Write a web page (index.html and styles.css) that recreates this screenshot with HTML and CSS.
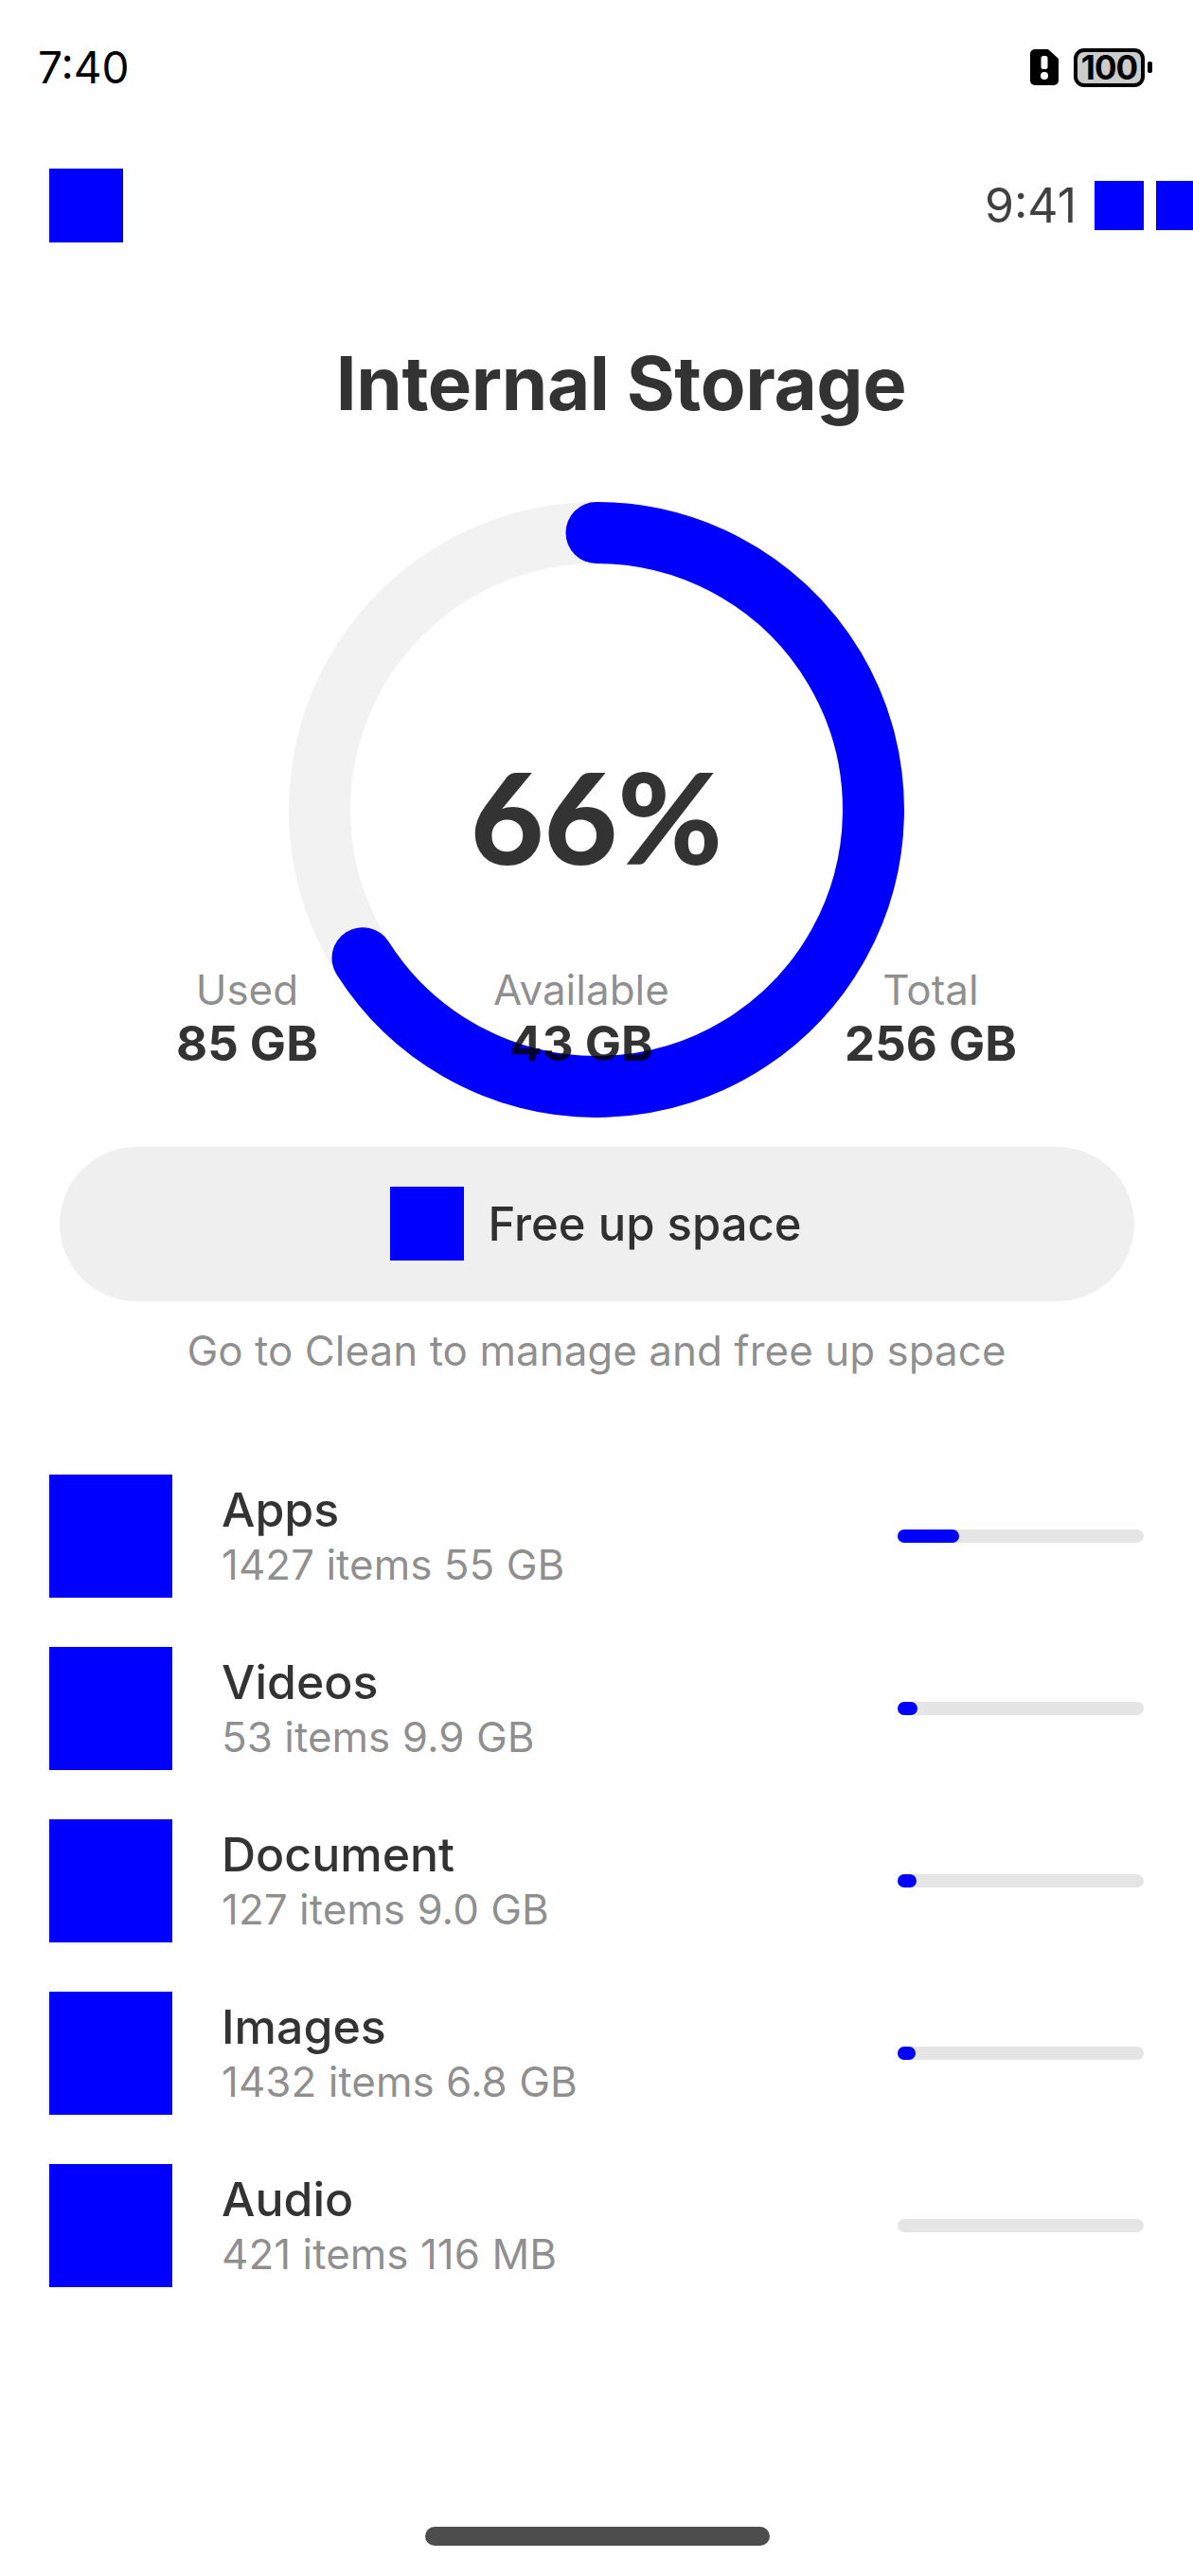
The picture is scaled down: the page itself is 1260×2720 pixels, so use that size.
FILE: index.html
```html
<!DOCTYPE html>
<html lang="en">
<head>
    <meta charset="UTF-8">
    <meta name="viewport" content="width=device-width, initial-scale=1.0">
    <title>Internal Storage</title>
    <link rel="stylesheet" href="styles.css">
</head>
<body>
    <div class="page">
        <div class="status-bar">
            <span class="clock">7:40</span>
            <div class="status-icons">
                <svg class="sim-icon" width="30" height="38" viewBox="0 0 30 38">
                    <path d="M5 0H19L30 10V33a5 5 0 0 1-5 5H5a5 5 0 0 1-5-5V5a5 5 0 0 1 5-5Z" fill="#000"/>
                    <rect x="11.5" y="7" width="7" height="14" rx="2.5" fill="#fff"/>
                    <circle cx="15" cy="28" r="4" fill="#fff"/>
                </svg>
                <div class="battery">100</div>
                <div class="battery-nub"></div>
            </div>
        </div>

        <div class="top-bar">
            <div class="icon-sm"></div>
            <div class="top-right">
                <span class="top-time">9:41</span>
                <div class="icon-xs"></div>
                <div class="icon-xs"></div>
            </div>
        </div>

        <h1>Internal Storage</h1>

        <div class="ring-area">
            <svg class="ring" width="650" height="650" viewBox="0 0 650 650">
                <circle cx="325" cy="325" r="292.5" fill="none" stroke="#f2f2f2" stroke-width="65"/>
                <path d="M325 32.5A292.5 292.5 0 1 1 78 481.7" fill="none" stroke="#0000ff" stroke-width="65" stroke-linecap="round"/>
            </svg>
            <div class="ring-value">66%</div>
            <div class="stats">
                <div class="stat"><span class="stat-label">Used</span><span class="stat-value">85 GB</span></div>
                <div class="stat"><span class="stat-label">Available</span><span class="stat-value">43 GB</span></div>
                <div class="stat"><span class="stat-label">Total</span><span class="stat-value">256 GB</span></div>
            </div>
        </div>

        <div class="clean-button">
            <div class="icon-sm"></div>
            <span>Free up space</span>
        </div>
        <p class="hint">Go to Clean to manage and free up space</p>

        <div class="categories">
            <div class="category">
                <div class="icon-lg"></div>
                <div class="category-text">
                    <div class="category-name">Apps</div>
                    <div class="category-meta">1427 items 55 GB</div>
                </div>
                <div class="bar"><div class="bar-fill" style="width: 65px"></div></div>
            </div>
            <div class="category">
                <div class="icon-lg"></div>
                <div class="category-text">
                    <div class="category-name">Videos</div>
                    <div class="category-meta">53 items 9.9 GB</div>
                </div>
                <div class="bar"><div class="bar-fill" style="width: 21px"></div></div>
            </div>
            <div class="category">
                <div class="icon-lg"></div>
                <div class="category-text">
                    <div class="category-name">Document</div>
                    <div class="category-meta">127 items 9.0 GB</div>
                </div>
                <div class="bar"><div class="bar-fill" style="width: 20px"></div></div>
            </div>
            <div class="category">
                <div class="icon-lg"></div>
                <div class="category-text">
                    <div class="category-name">Images</div>
                    <div class="category-meta">1432 items 6.8 GB</div>
                </div>
                <div class="bar"><div class="bar-fill" style="width: 19px"></div></div>
            </div>
            <div class="category">
                <div class="icon-lg"></div>
                <div class="category-text">
                    <div class="category-name">Audio</div>
                    <div class="category-meta">421 items 116 MB</div>
                </div>
                <div class="bar"></div>
            </div>
        </div>

        <div class="home-bar"></div>
    </div>
</body>
</html>
```
FILE: styles.css
```css
/* General Styles */
html, body {
    margin: 0;
    padding: 0;
    background-color: #ffffff;
}

.page {
    position: relative;
    width: 1260px;
    height: 2720px;
    overflow: hidden;
    font-family: "Inter", sans-serif;
    color: rgba(0, 0, 0, 0.8);
}

/* Status Bar */
.status-bar {
    display: flex;
    justify-content: space-between;
    align-items: center;
    height: 42px;
    padding: 50px 43px 0 40px;
}

.clock {
    font-size: 46px;
    line-height: 42px;
    color: #000;
}

.status-icons {
    display: flex;
    align-items: center;
}

.sim-icon {
    margin-right: 16px;
}

.battery {
    box-sizing: border-box;
    width: 75px;
    height: 41px;
    border: 4px solid #000;
    border-radius: 11px;
    background-color: #cccccc;
    color: #000;
    font-size: 35px;
    font-weight: 700;
    line-height: 33px;
    letter-spacing: -1px;
    text-align: center;
}

.battery-nub {
    width: 5px;
    height: 12px;
    margin-left: 3px;
    border-radius: 2px;
    background-color: #000;
}

/* Top Bar */
.top-bar {
    display: flex;
    justify-content: space-between;
    align-items: center;
    height: 78px;
    margin-top: 86px;
    padding-left: 52px;
}

.top-right {
    display: flex;
    align-items: center;
    flex-shrink: 0;
    margin-right: -13px;
    gap: 13px;
}

.top-time {
    margin-right: 6px;
    font-size: 50px;
    color: rgba(0, 0, 0, 0.75);
}

.icon-sm {
    width: 78px;
    height: 78px;
    background-color: #0000ff;
}

.icon-xs {
    width: 52px;
    height: 52px;
    background-color: #0000ff;
}

/* Heading */
h1 {
    margin: 101px 0 0;
    padding-left: 52px;
    font-size: 78px;
    font-weight: 650;
    line-height: 96px;
    letter-spacing: -0.4px;
    text-align: center;
}

/* Ring */
.ring-area {
    position: relative;
    height: 650px;
    margin-top: 77px;
}

.ring {
    display: block;
    margin: 0 auto;
}

.ring-value {
    position: absolute;
    top: 262px;
    left: 0;
    width: 100%;
    font-family: "Lato", sans-serif;
    font-size: 134px;
    font-weight: 900;
    line-height: 140px;
    text-align: center;
}

.stats {
    position: absolute;
    top: 487px;
    left: 186px;
    right: 186px;
    display: flex;
    justify-content: space-between;
}

.stat {
    display: flex;
    flex-direction: column;
    align-items: center;
}

.stat-label {
    font-size: 44px;
    line-height: 56px;
    color: rgba(0, 0, 0, 0.45);
}

.stat-value {
    font-size: 51px;
    font-weight: 700;
    line-height: 57px;
}

/* Free Up Space Button */
.clean-button {
    display: flex;
    justify-content: center;
    align-items: center;
    gap: 25px;
    height: 163px;
    margin: 31px 62px 0 63px;
    padding: 0 2px 1px 0;
    box-sizing: border-box;
    border-radius: 82px;
    background-color: #efefef;
    font-size: 49px;
    font-weight: 500;
}

.hint {
    margin: 22px 0 0;
    font-size: 44px;
    line-height: 60px;
    text-align: center;
    color: rgba(0, 0, 0, 0.45);
}

/* Category List */
.categories {
    display: flex;
    flex-direction: column;
    gap: 52px;
    margin-top: 101px;
    padding: 0 52px;
}

.category {
    display: flex;
    align-items: center;
    height: 130px;
}

.icon-lg {
    flex-shrink: 0;
    width: 130px;
    height: 130px;
    background-color: #0000ff;
}

.category-text {
    flex-grow: 1;
    margin-left: 52px;
    padding-top: 3px;
}

.category-name {
    font-size: 50px;
    line-height: 54px;
    font-weight: 500;
}

.category-meta {
    margin-top: 3px;
    font-size: 44px;
    line-height: 56px;
    color: rgba(0, 0, 0, 0.45);
}

.bar {
    width: 260px;
    height: 14px;
    border-radius: 7px;
    background-color: #e5e5e5;
}

.bar-fill {
    height: 14px;
    border-radius: 7px;
    background-color: #0000ff;
}

/* Home Indicator */
.home-bar {
    position: absolute;
    top: 2668px;
    left: 449px;
    width: 364px;
    height: 20px;
    border-radius: 10px;
    background-color: #4d4d4d;
}
```
